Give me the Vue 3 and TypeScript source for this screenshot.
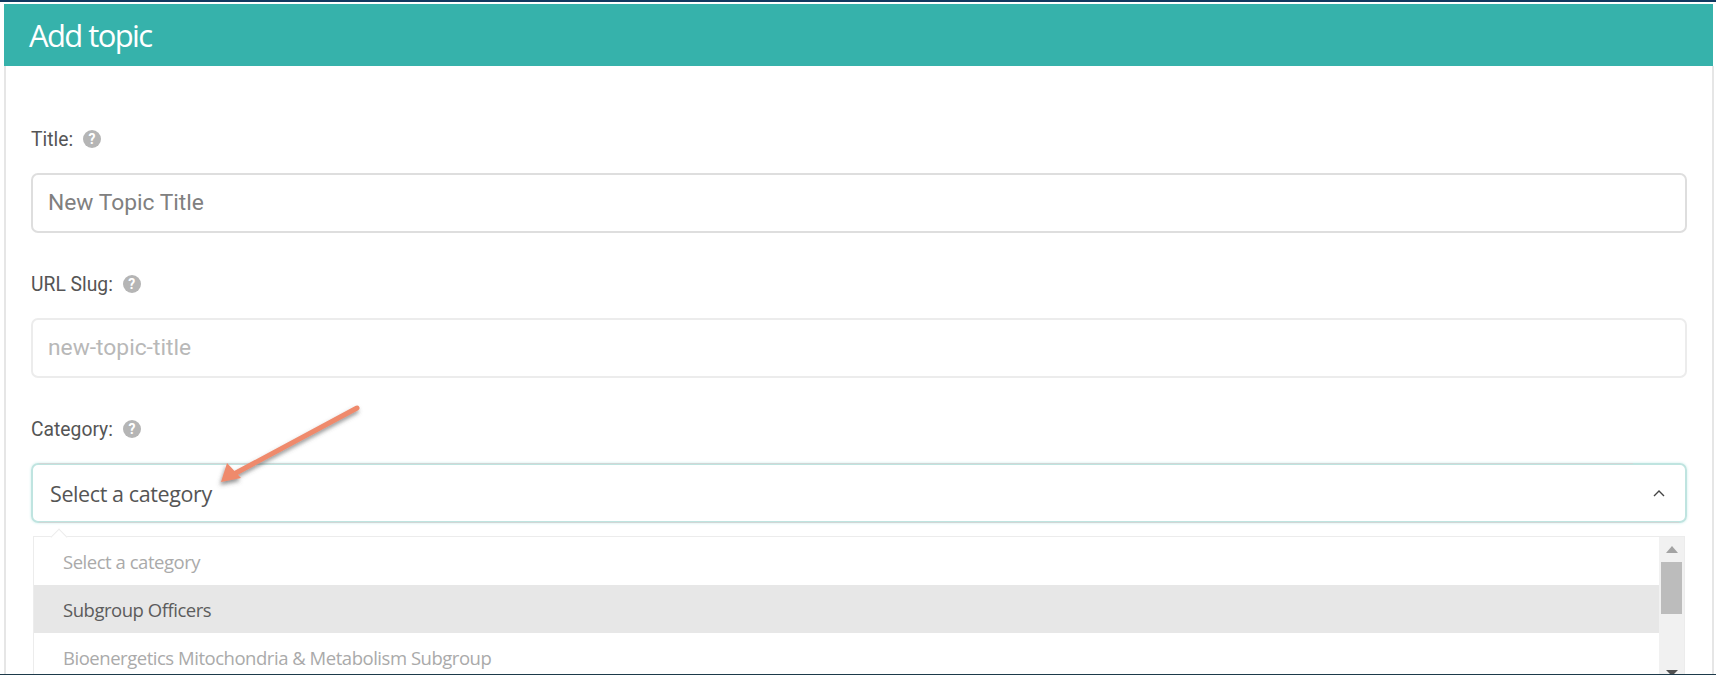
<script setup lang="ts">
const fields = [
  { label: 'Title:', placeholder: 'New Topic Title', muted: false },
  { label: 'URL Slug:', placeholder: 'new-topic-title', muted: true },
]
const options = [
  { text: 'Select a category', kind: 'muted' },
  { text: 'Subgroup Officers', kind: 'active' },
  { text: 'Bioenergetics Mitochondria & Metabolism Subgroup', kind: 'muted' },
]
</script>

<template>
  <div class="page">
    <div class="topline"></div>
    <main class="card">
      <header class="head"><h1>Add topic</h1></header>
      <form class="body">
        <div v-for="f in fields" :key="f.label" class="field">
          <label class="label">{{ f.label }}<span class="help">?</span></label>
          <div class="input" :class="{ muted: f.muted }">{{ f.placeholder }}</div>
        </div>
        <div class="field">
          <label class="label">Category:<span class="help">?</span></label>
          <div class="select">
            <span>Select a category</span>
            <svg class="chev" width="14" height="9" viewBox="0 0 14 9"><path d="M2 7 L7 2 L12 7" fill="none" stroke="#444" stroke-width="1.4"/></svg>
          </div>
          <div class="drop">
            <span class="caret"></span>
            <ul class="list">
              <li v-for="o in options" :key="o.text" :class="o.kind">{{ o.text }}</li>
            </ul>
            <div class="scroll">
              <span class="up"></span>
              <span class="thumb"></span>
              <span class="down"></span>
            </div>
          </div>
        </div>
      </form>
    </main>
    <div class="bottomline"></div>
    <svg class="arrow" width="1716" height="675" viewBox="0 0 1716 675">
      <defs><filter id="sh" x="-20%" y="-20%" width="140%" height="140%"><feDropShadow dx="-1" dy="3" stdDeviation="2" flood-color="#555" flood-opacity=".65"/></filter></defs>
      <g filter="url(#sh)">
        <path d="M357 408 L234 474" stroke="#ef8a6c" stroke-width="5" fill="none" stroke-linecap="round"/>
        <path d="M221 482 L227 463 L241 478 Z" fill="#ef8a6c"/>
      </g>
    </svg>
  </div>
</template>

<style>
html, body { margin: 0; background: #fff; }
</style>

<style scoped>
.page {
  position: relative;
  width: 1716px;
  height: 675px;
  display: flex;
  flex-direction: column;
  overflow: hidden;
  background: #fff;
  font-family: Roboto, "Liberation Sans", sans-serif;
}
.topline { height: 2px; background: #11395f; margin-bottom: 2px; flex: none; }
.bottomline { height: 1px; background: #1d3a4a; flex: none; }
.card {
  flex: 1;
  min-height: 0;
  overflow: hidden;
  margin: 0 2px 0 4px;
}
.head {
  height: 62px;
  background: #36b2ab;
  display: flex;
  align-items: center;
  padding-left: 25px;
  margin-right: 1px;
}
h1 {
  margin: 0;
  font: 400 31px/1 "Open Sans", sans-serif;
  letter-spacing: -1.6px;
  color: #fff;
}
.body {
  height: 100%;
  padding: 62px 25px 0;
  border-left: 2px solid #e6e6e6;
  border-right: 2px solid #e6e6e6;
  display: flex;
  flex-direction: column;
  gap: 40px;
}
.label {
  display: flex;
  align-items: center;
  height: 22px;
  font-size: 19.3px;
  color: #555;
  margin-bottom: 23px;
}
.help {
  width: 18px;
  height: 18px;
  margin-left: 10px;
  border-radius: 50%;
  background: #b5b5b5;
  color: #fff;
  font-size: 14px;
  font-weight: 700;
  line-height: 18px;
  text-align: center;
}
.input {
  height: 60px;
  box-sizing: border-box;
  border: 2px solid #dedede;
  border-radius: 7px;
  padding: 0 0 2px 15px;
  display: flex;
  align-items: center;
  font-size: 22.8px;
  color: #808080;
}
.input.muted { color: #b8b8b8; border-color: #ececec; }
.select {
  position: relative;
  height: 60px;
  box-sizing: border-box;
  border: 2px solid #bfe4e0;
  box-shadow: 0 0 3px #cdeeeb;
  border-radius: 7px;
  padding: 0 19px 0 17px;
  display: flex;
  align-items: center;
  justify-content: space-between;
  font: 400 21.5px "Open Sans", sans-serif;
  letter-spacing: -.4px;
  color: #555;
}
.select::before {
  content: "";
  position: absolute;
  left: 6px;
  right: 52px;
  top: -2px;
  height: 1px;
  background: #d2d6d6;
}
.select::after {
  content: "";
  position: absolute;
  left: 6px;
  right: 6px;
  bottom: -2px;
  height: 1px;
  background: #d2d6d6;
}
.drop {
  position: relative;
  display: flex;
  margin: 13px 0 0 2px;
  width: 1652px;
  height: 140px;
  border: 1px solid #ececec;
  border-bottom: 0;
  box-sizing: border-box;
}
.caret {
  position: absolute;
  left: 19px;
  top: -6px;
  width: 11px;
  height: 11px;
  background: #fff;
  border-left: 1px solid #ececec;
  border-top: 1px solid #ececec;
  transform: rotate(45deg);
}
.list {
  flex: 1;
  list-style: none;
  margin: 0;
  padding: 0;
  font: 400 18.5px "Open Sans", sans-serif;
  letter-spacing: -.47px;
}
.list li {
  height: 48px;
  padding-left: 29px;
  display: flex;
  align-items: center;
}
.list li.muted { color: #aaa; }
.list li.active { background: #e7e7e7; color: #5c5c5c; }
.scroll {
  width: 25px;
  background: #f1f1f1;
  display: flex;
  flex-direction: column;
  align-items: center;
  flex: none;
}
.up {
  margin-top: 9px;
  border: 6px solid transparent;
  border-top: 0;
  border-bottom: 7px solid #a3a3a3;
}
.thumb { width: 21px; height: 52px; margin-top: 9px; background: #bcbcbc; }
.down {
  margin-top: auto;
  margin-bottom: 0;
  border: 6px solid transparent;
  border-bottom: 0;
  border-top: 6px solid #505050;
}
.arrow { position: absolute; left: 0; top: 0; pointer-events: none; }
</style>
